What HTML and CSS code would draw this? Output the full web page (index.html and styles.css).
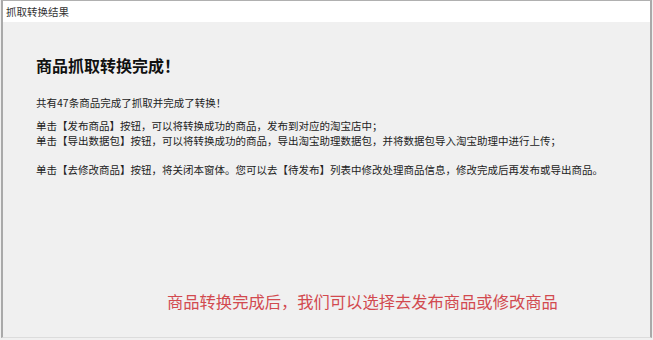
FILE: index.html
```html
<!DOCTYPE html>
<html lang="zh">
<head>
  <meta charset="UTF-8">
  <title>抓取转换结果</title>
  <link rel="stylesheet" href="styles.css">
</head>
<body>

<div class="ventana">
  <div class="titulo">抓取转换结果</div>

  <div class="contenido">
    <h1>商品抓取转换完成！</h1>
    <p class="resumen">共有47条商品完成了抓取并完成了转换！</p>
    <p class="texto">单击【发布商品】按钮，可以将转换成功的商品，发布到对应的淘宝店中；<br>
      单击【导出数据包】按钮，可以将转换成功的商品，导出淘宝助理数据包，并将数据包导入淘宝助理中进行上传；</p>
    <p class="texto">单击【去修改商品】按钮，将关闭本窗体。您可以去【待发布】列表中修改处理商品信息，修改完成后再发布或导出商品。</p>

    <div class="nota">商品转换完成后，我们可以选择去发布商品或修改商品</div>
  </div>
</div>

</body>
</html>
```

FILE: styles.css
```css
body {
  margin: 0;
  padding: 0;
  background-color: #f0f0f0;
  font-family: "Noto Sans CJK SC", "Liberation Sans", sans-serif;
  color: #222;
}
.ventana {
  width: 647px;
  height: 336px;
  margin-left: 1px;
  border: 2px solid #a9a9a9;
  border-top: 1px solid #b0b0b0;
  border-bottom: 1px solid #dcdcdc;
  background-color: #f0f0f0;
  display: flex;
  flex-direction: column;
}
.titulo {
  height: 21px;
  background-color: #fff;
  font-size: 10.5px;
  line-height: 21px;
  padding-left: 3px;
  color: #333;
}
.contenido {
  padding: 0 0 0 33px;
  flex: 1;
  display: flex;
  flex-direction: column;
}
h1 {
  margin: 31px 0 0 0;
  font-size: 16px;
  line-height: 24px;
  font-weight: bold;
  color: #111;
}
.resumen {
  margin: 18px 0 0 0;
  font-size: 10.5px;
  line-height: 15px;
}
.texto {
  margin: 8px 0 0 0;
  font-size: 10.5px;
  line-height: 15px;
}
.texto + .texto {
  margin-top: 14px;
}
.nota {
  margin: 113px 0 0 131px;
  font-size: 16.3px;
  line-height: 22px;
  color: #d24a4f;
}
```
